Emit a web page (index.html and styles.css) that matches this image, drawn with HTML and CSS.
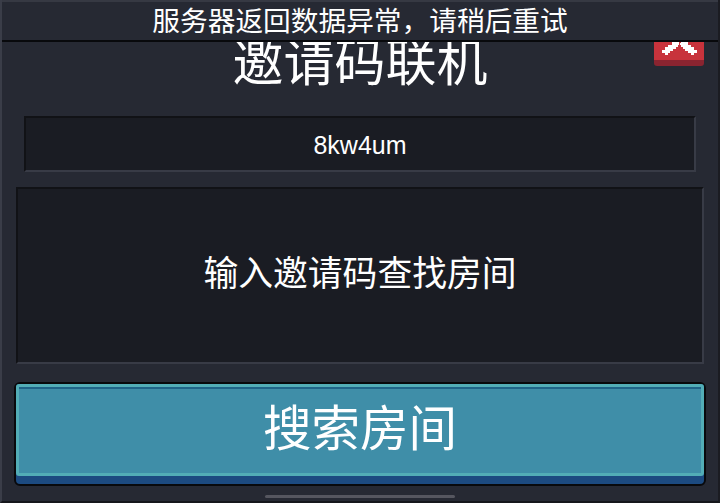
FILE: index.html
```html
<!DOCTYPE html>
<html lang="zh-CN">
<head>
    <meta charset="UTF-8">
    <title>邀请码联机</title>
    <link rel="stylesheet" href="styles.css">
</head>
<body>
    <div class="screen">
        <div class="toast">服务器返回数据异常，请稍后重试</div>

        <h1 class="title">邀请码联机</h1>

        <div class="close-btn">
            <svg class="close-icon" width="36" height="14" viewBox="0 0 36 14" shape-rendering="crispEdges">
                <path fill="#fff" d="M10 0h7v3h-1v2h-2v2h-3v2H8v2H6v2H3v-2H0V8h3V5h3V3h4zM19 0h7v3h3v2h3v3h3v3h-3v2h-3v-2h-3V9h-3V7h-2V5h-2V3h-1z"/>
            </svg>
        </div>

        <div class="code-input">8kw4um</div>

        <div class="result-panel">输入邀请码查找房间</div>

        <div class="search-btn">
            <div class="search-btn-face">搜索房间</div>
        </div>

        <div class="home-bar"></div>
    </div>
</body>
</html>
```

FILE: styles.css
```css
* {
    box-sizing: border-box;
}

body {
    margin: 0;
    background: #16171c;
    font-family: "Liberation Sans", "Noto Sans CJK SC", sans-serif;
    color: #fff;
}

.screen {
    position: relative;
    width: 720px;
    height: 503px;
    overflow: hidden;
    background: #262933;
    border-left: 2px solid #3a3d48;
    border-right: 2px solid #1b1c22;
    border-bottom: 2px solid #15161b;
    display: flex;
    flex-direction: column;
    align-items: center;
}

.toast {
    position: absolute;
    top: 0;
    left: -2px;
    width: 720px;
    height: 42px;
    background: #262933;
    border: 2px solid #363943;
    border-bottom: 2px solid #08090c;
    text-align: center;
    font-size: 27.7px;
    line-height: 40px;
    z-index: 2;
}

.title {
    margin: 33px 0 0;
    font-size: 51px;
    font-weight: 400;
    line-height: 62px;
    height: 83px;
}

.close-btn {
    position: absolute;
    top: 26px;
    right: 14px;
    width: 50px;
    height: 40px;
    background: #c8333c;
    border-bottom: 6px solid #8a2430;
    border-radius: 3px;
}

.close-icon {
    position: absolute;
    top: 16px;
    left: 8px;
}

.code-input {
    width: 672px;
    height: 56px;
    background: #1a1c23;
    border: 2px solid #111216;
    border-bottom-color: #383b46;
    border-right-color: #383b46;
    text-align: center;
    font-size: 25px;
    line-height: 54px;
}

.result-panel {
    width: 688px;
    height: 177px;
    margin-top: 15px;
    padding-bottom: 10px;
    background: #1a1c23;
    border: 2px solid #111216;
    border-bottom-color: #383b46;
    border-right-color: #383b46;
    display: flex;
    align-items: center;
    justify-content: center;
    font-size: 34.8px;
}

.search-btn {
    width: 692px;
    height: 104px;
    margin-top: 18px;
    background: #1c4a80;
    border: 2px solid #08090c;
    border-radius: 6px;
}

.search-btn-face {
    height: 92px;
    background: #3f8ea8;
    border: 3px solid #52adb6;
    border-radius: 3px;
    box-shadow: inset 0 2px 0 #1f6488;
    display: flex;
    align-items: center;
    justify-content: center;
    padding-bottom: 10px;
    font-size: 48.5px;
}

.home-bar {
    position: absolute;
    left: 263px;
    bottom: 3px;
    width: 190px;
    height: 3px;
    border-radius: 2px;
    background: #55565f;
}
```
